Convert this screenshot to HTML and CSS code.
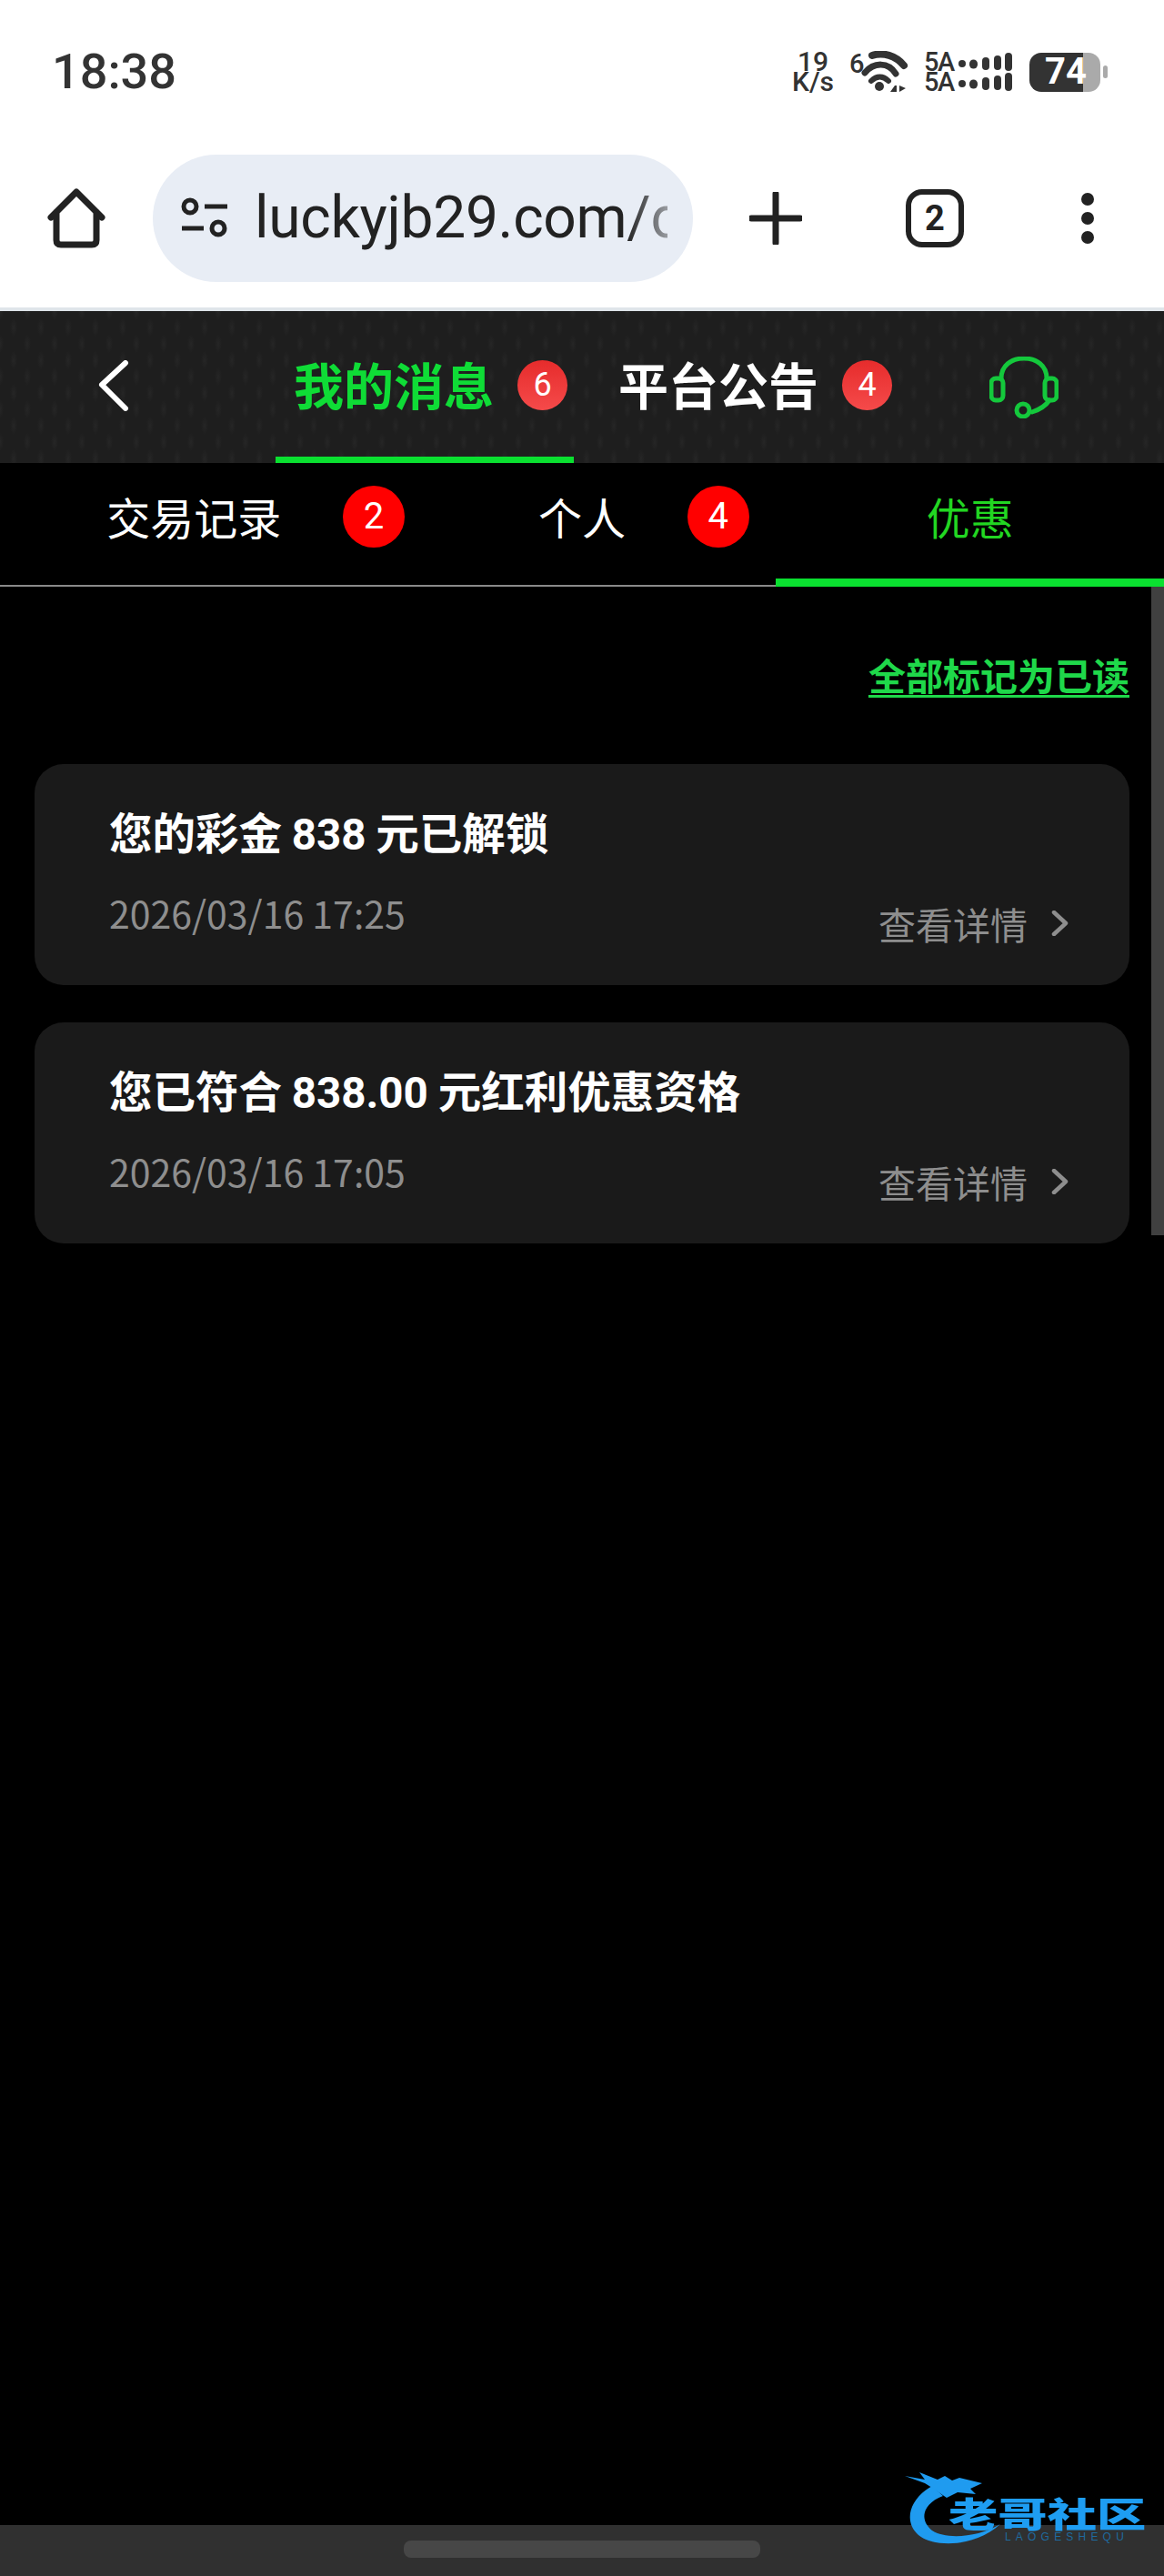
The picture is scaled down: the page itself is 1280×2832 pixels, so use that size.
FILE: index.html
```html
<!DOCTYPE html>
<html lang="zh-CN">
<head>
<meta charset="utf-8">
<title>我的消息</title>
<link rel="stylesheet" href="styles.css">
</head>
<body>
<div class="phone">
  <div class="status">
    <span class="clock">18:38</span>
    <div class="sysicons">
      <div class="speed"><span>19</span><span>K/s</span></div>
      <div class="wifi">
        <span class="wifi-six">6</span>
        <svg width="54" height="46" viewBox="0 0 54 46">
          <path class="wifi-arc a1" d="M12 5C24 1 38 5 47 16"/>
          <path class="wifi-arc a2" d="M4 24C14 12 30 12 38 25"/>
          <path class="wifi-arc a3" d="M11 33C17 27 24 27 30 33"/>
          <circle class="wifi-fill" cx="20" cy="39" r="5"/>
          <path class="wifi-fill" d="M32 45l5-7h2v7zM42 38l7 3-7 4z"/>
        </svg>
      </div>
      <div class="signals">
        <div class="sig"><span class="sig-label">5A</span><svg width="61" height="20" viewBox="0 0 61 20"><circle class="wifi-fill" cx="5" cy="12" r="4"/><rect class="wifi-fill" x="13" y="7.500" width="9" height="10" rx="4.500"/><rect class="wifi-fill" x="27" y="5" width="8" height="14" rx="4"/><rect class="wifi-fill" x="40" y="3" width="8" height="16" rx="4"/><rect class="wifi-fill" x="52" y="0" width="8" height="20" rx="4"/></svg></div>
        <div class="sig"><span class="sig-label">5A</span><svg width="61" height="20" viewBox="0 0 61 20"><circle class="wifi-fill" cx="5" cy="12" r="4"/><rect class="wifi-fill" x="13" y="7.500" width="9" height="10" rx="4.500"/><rect class="wifi-fill" x="27" y="5" width="8" height="14" rx="4"/><rect class="wifi-fill" x="40" y="3" width="8" height="16" rx="4"/><rect class="wifi-fill" x="52" y="0" width="8" height="20" rx="4"/></svg></div>
      </div>
      <div class="battery"><span class="batt-body"><span class="batt-num">74</span></span><span class="batt-nub"></span></div>
    </div>
  </div>

  <div class="toolbar">
    <svg class="home" width="64" height="66" viewBox="0 0 64 66"><path d="M4 32L32 4L60 32M10 26V57Q10 62 15 62H49Q54 62 54 57V26"/></svg>
    <div class="pill">
      <svg class="tune" width="52" height="46" viewBox="0 0 52 46"><circle cx="10" cy="10" r="7"/><path d="M26 10H51M1 34H25"/><circle cx="41" cy="34" r="7"/></svg>
      <span class="url">luckyjb29.com/c</span>
    </div>
    <svg class="plus" width="58" height="58" viewBox="0 0 58 58"><path d="M29 2V56M2 29H56"/></svg>
    <div class="tabcount"><span>2</span></div>
    <div class="kebab"><i></i><i></i><i></i></div>
  </div>

  <header class="msgnav">
    <svg class="back" width="34" height="56" viewBox="0 0 34 56"><path d="M30 3L4 27L30 53"/></svg>
    <div class="navtab active"><span>我的消息</span><b class="navbadge">6</b></div>
    <div class="navtab"><span>平台公告</span><b class="navbadge">4</b></div>
    <svg class="headset" width="76" height="68" viewBox="0 0 76 68">
      <path d="M13 24C13 10 24 2 38 2C52 2 63 10 63 24"/>
      <rect x="2" y="24" width="13" height="24" rx="5"/>
      <rect x="61" y="24" width="13" height="24" rx="5"/>
      <path d="M66 48C62 54 56 58 47 61"/>
      <circle cx="37" cy="59" r="7"/>
    </svg>
  </header>

  <nav class="subtabs">
    <div class="subtab"><span>交易记录</span><b class="subbadge">2</b></div>
    <div class="subtab"><span>个人</span><b class="subbadge">4</b></div>
    <div class="subtab active"><span>优惠</span></div>
  </nav>

  <main class="content">
    <div class="scrollthumb"></div>
    <a class="markread">全部标记为已读</a>
    <article class="card">
      <h2>您的彩金 838 元已解锁</h2>
      <div class="cardfoot">
        <time>2026/03/16 17:25</time>
        <span class="detail">查看详情<svg width="20" height="28" viewBox="0 0 20 28"><path d="M3 2L16 14L3 26"/></svg></span>
      </div>
    </article>
    <article class="card">
      <h2>您已符合 838.00 元红利优惠资格</h2>
      <div class="cardfoot">
        <time>2026/03/16 17:05</time>
        <span class="detail">查看详情<svg width="20" height="28" viewBox="0 0 20 28"><path d="M3 2L16 14L3 26"/></svg></span>
      </div>
    </article>
  </main>

  <footer class="gesture"><div class="handle"></div></footer>

  <div class="watermark">
    <svg class="dragon" width="130" height="90" viewBox="0 0 130 90">
      <path class="dragon-body" d="M30 21C5 35 -2 60 15 75C30 88 75 90 105 63C80 78 45 80 30 70C15 58 20 40 42 32Z"/>
      <path class="dragon-body" d="M0 10L22 14L16 6L36 14L44 10L52 15L60 12L85 18L72 24L78 30L58 28L46 34L30 23L22 18Z"/>
    </svg>
    <span class="wm-cn">老哥社区</span>
    <span class="wm-en">LAOGESHEQU</span>
  </div>
</div>
</body>
</html>
```
FILE: styles.css
```css
* { box-sizing: border-box; }
html, body { margin: 0; padding: 0; background: #000; }
.phone {
  position: relative;
  width: 1280px;
  height: 2832px;
  display: flex;
  flex-direction: column;
  overflow: hidden;
  background: #000;
  font-family: "Noto Sans CJK SC", "Noto Sans", sans-serif;
}

/* status bar */
.status {
  height: 158px;
  background: #fff;
  display: flex;
  align-items: center;
  justify-content: space-between;
  padding: 0 62px 0 57px;
}
.clock {
  font: 500 54px/1 Roboto, sans-serif;
  color: #333;
}
.sysicons {
  display: flex;
  align-items: center;
  color: #333;
  font-family: Roboto, sans-serif;
  font-weight: 500;
}
.speed {
  display: flex;
  flex-direction: column;
  align-items: center;
  font-size: 30px;
  line-height: 22px;
  width: 46px;
}
.wifi {
  display: flex;
  align-items: flex-start;
  margin-left: 17px;
  width: 67px;
  height: 46px;
}
.wifi-six { font-size: 29px; line-height: 28px; width: 13px; flex: none; }
.wifi-arc { fill: none; stroke: #333; stroke-linecap: round; }
.a1 { stroke-width: 8; }
.a2 { stroke-width: 7; }
.a3 { stroke-width: 6; }
.wifi-fill { fill: #333; }
.signals { display: flex; flex-direction: column; gap: 1px; margin-left: 15px; }
.sig {
  display: flex;
  align-items: center;
  gap: 5px;
  height: 21px;
  font-size: 29px;
  line-height: 21px;
}
.sig-label { width: 32px; letter-spacing: -1.500px; flex: none; }
.battery { display: flex; align-items: center; margin-left: 18px; }
.batt-body {
  width: 78px;
  height: 43px;
  border-radius: 13px;
  background: linear-gradient(90deg, #333 0 59px, #aaa 59px);
  display: flex;
  align-items: center;
  padding-left: 17px;
}
.batt-num { font: 700 40px/1 Roboto, sans-serif; color: #fff; }
.batt-nub {
  width: 5px;
  height: 14px;
  border-radius: 3px;
  background: #aaa;
  margin-left: 3px;
}

/* browser toolbar */
.toolbar {
  height: 184px;
  background: #fff;
  display: flex;
  align-items: center;
  padding-bottom: 16px;
  border-bottom: 4px solid #dfe5ea;
}
.home { margin-left: 52px; flex: none; }
.home path { fill: none; stroke: #222; stroke-width: 7; stroke-linecap: round; stroke-linejoin: round; }
.pill {
  width: 594px;
  height: 140px;
  margin-left: 52px;
  border-radius: 70px;
  background: #e8edf5;
  display: flex;
  align-items: center;
  padding-left: 31px;
  flex: none;
}
.tune { flex: none; }
.tune circle, .tune path { fill: none; stroke: #222; stroke-width: 5; }
.url {
  margin-left: 29px;
  width: 454px;
  overflow: hidden;
  white-space: nowrap;
  font: 400 64px/80px Roboto, sans-serif;
  letter-spacing: -0.300px;
  color: #222;
  -webkit-mask-image: linear-gradient(90deg, #000 90%, rgba(0,0,0,.4) 100%);
  mask-image: linear-gradient(90deg, #000 90%, rgba(0,0,0,.4) 100%);
}
.plus { margin-left: 62px; flex: none; }
.plus path { fill: none; stroke: #222; stroke-width: 7; stroke-linecap: round; }
.tabcount {
  width: 64px;
  height: 64px;
  margin-left: 114px;
  border: 6px solid #222;
  border-radius: 18px;
  display: flex;
  align-items: center;
  justify-content: center;
  font: 700 38px/1 Roboto, sans-serif;
  color: #222;
  flex: none;
}
.kebab {
  display: flex;
  flex-direction: column;
  gap: 7px;
  margin-left: 129px;
}
.kebab i { width: 14px; height: 14px; border-radius: 50%; background: #222; display: block; }

/* message nav */
.msgnav {
  height: 167px;
  display: flex;
  background-color: #1e1e1e;
  background-image:
    radial-gradient(ellipse 4px 10px at 50% 50%, #262626, transparent),
    radial-gradient(ellipse 4px 10px at 50% 50%, #262626, transparent);
  background-size: 30px 36px;
  background-position: 0 0, 15px 18px;
  position: relative;
  flex: none;
}
.back { position: absolute; left: 108px; top: 54px; }
.back path { fill: none; stroke: #fff; stroke-width: 6; stroke-linecap: round; stroke-linejoin: round; }
.navtab {
  width: 328px;
  position: relative;
  padding-top: 40px;
  padding-left: 20px;
  font-size: 55px;
  font-weight: 700;
  line-height: 78px;
  color: #fff;
  white-space: nowrap;
}
.navtab:first-of-type { margin-left: 303px; }
.navtab + .navtab { margin-left: 29px; }
.navtab.active { color: #0fdc36; border-bottom: 7px solid #0ae030; }
.navbadge {
  position: absolute;
  left: 266px;
  top: 54px;
  width: 55px;
  height: 55px;
  border-radius: 50%;
  background: linear-gradient(180deg, #e62c2c, #f54a4a);
  color: #fff;
  font: 400 36px/55px Roboto, sans-serif;
  text-align: center;
}
.headset { position: absolute; left: 1088px; top: 50px; }
.headset path, .headset rect, .headset circle { fill: none; stroke: #14c83c; stroke-width: 5; stroke-linecap: round; }

/* sub tabs */
.subtabs {
  height: 136px;
  flex: none;
  display: grid;
  grid-template-columns: repeat(3, 1fr);
  border-bottom: 2px solid #8a8a8a;
  background: #000;
}
.subtab {
  position: relative;
  display: flex;
  justify-content: center;
  padding-top: 20px;
  font-size: 48px;
  line-height: 76px;
  font-weight: 400;
  color: #fff;
  height: 136px;
}
.subtab.active { color: #22d622; border-bottom: 9px solid #0ae030; }
.subbadge {
  position: absolute;
  top: 25px;
  width: 68px;
  height: 68px;
  border-radius: 50%;
  background: #f00;
  color: #fff;
  font: 400 40px/68px Roboto, sans-serif;
  text-align: center;
}
.subtab:nth-child(1) .subbadge { left: 377px; }
.subtab:nth-child(2) .subbadge { left: 329px; }

/* content */
.content {
  position: relative;
  flex: 1;
  padding: 0 38px;
  display: flex;
  flex-direction: column;
  background: #000;
}
.scrollthumb {
  position: absolute;
  right: 0;
  top: 0;
  width: 14px;
  height: 713px;
  background: #404040;
}
.markread {
  align-self: flex-end;
  margin-top: 66px;
  margin-bottom: 69px;
  font-size: 41px;
  line-height: 60px;
  font-weight: 700;
  color: #1fd84a;
  text-decoration: underline;
  text-decoration-thickness: 3px;
  text-underline-offset: 5px;
}
.card {
  height: 243px;
  border-radius: 32px;
  background: #1a1a1a;
  padding: 43px 66px 0 82px;
  margin-bottom: 41px;
}
.card h2 {
  margin: 0;
  font-family: Roboto, "Noto Sans CJK SC", sans-serif;
  font-size: 47.500px;
  line-height: 70px;
  font-weight: 700;
  word-spacing: -1px;
  color: #fff;
  white-space: nowrap;
}
.cardfoot {
  display: flex;
  justify-content: space-between;
  align-items: flex-start;
  margin-top: 22px;
}
.cardfoot time {
  font-size: 41px;
  line-height: 56px;
  color: #8e8e8e;
}
.detail {
  display: flex;
  align-items: center;
  gap: 26px;
  margin-top: 12px;
  font-size: 41px;
  line-height: 56px;
  color: #8e8e8e;
}
.detail svg path { fill: none; stroke: #8e8e8e; stroke-width: 4.500; stroke-linecap: round; stroke-linejoin: round; }

/* gesture bar */
.gesture {
  height: 56px;
  flex: none;
  background: #303030;
  display: flex;
  justify-content: center;
  padding-top: 17px;
}
.handle { width: 392px; height: 19px; border-radius: 8px; background: #474747; }

/* watermark */
.watermark { position: absolute; left: 995px; top: 2712px; width: 270px; height: 90px; }
.dragon { position: absolute; left: 0; top: 0; }
.dragon-body { fill: #1f9bf0; }
.wm-cn {
  position: absolute;
  left: 48px;
  top: 26px;
  font-size: 38px;
  line-height: 48px;
  font-weight: 900;
  letter-spacing: 0;
  color: #1e9df2;
  white-space: nowrap;
  transform: scaleX(1.43);
  transform-origin: left center;
}
.wm-en {
  position: absolute;
  left: 110px;
  top: 70px;
  font: 400 12px/14px "Liberation Sans", sans-serif;
  letter-spacing: 5.200px;
  color: #1f6a9e;
  white-space: nowrap;
}
```
